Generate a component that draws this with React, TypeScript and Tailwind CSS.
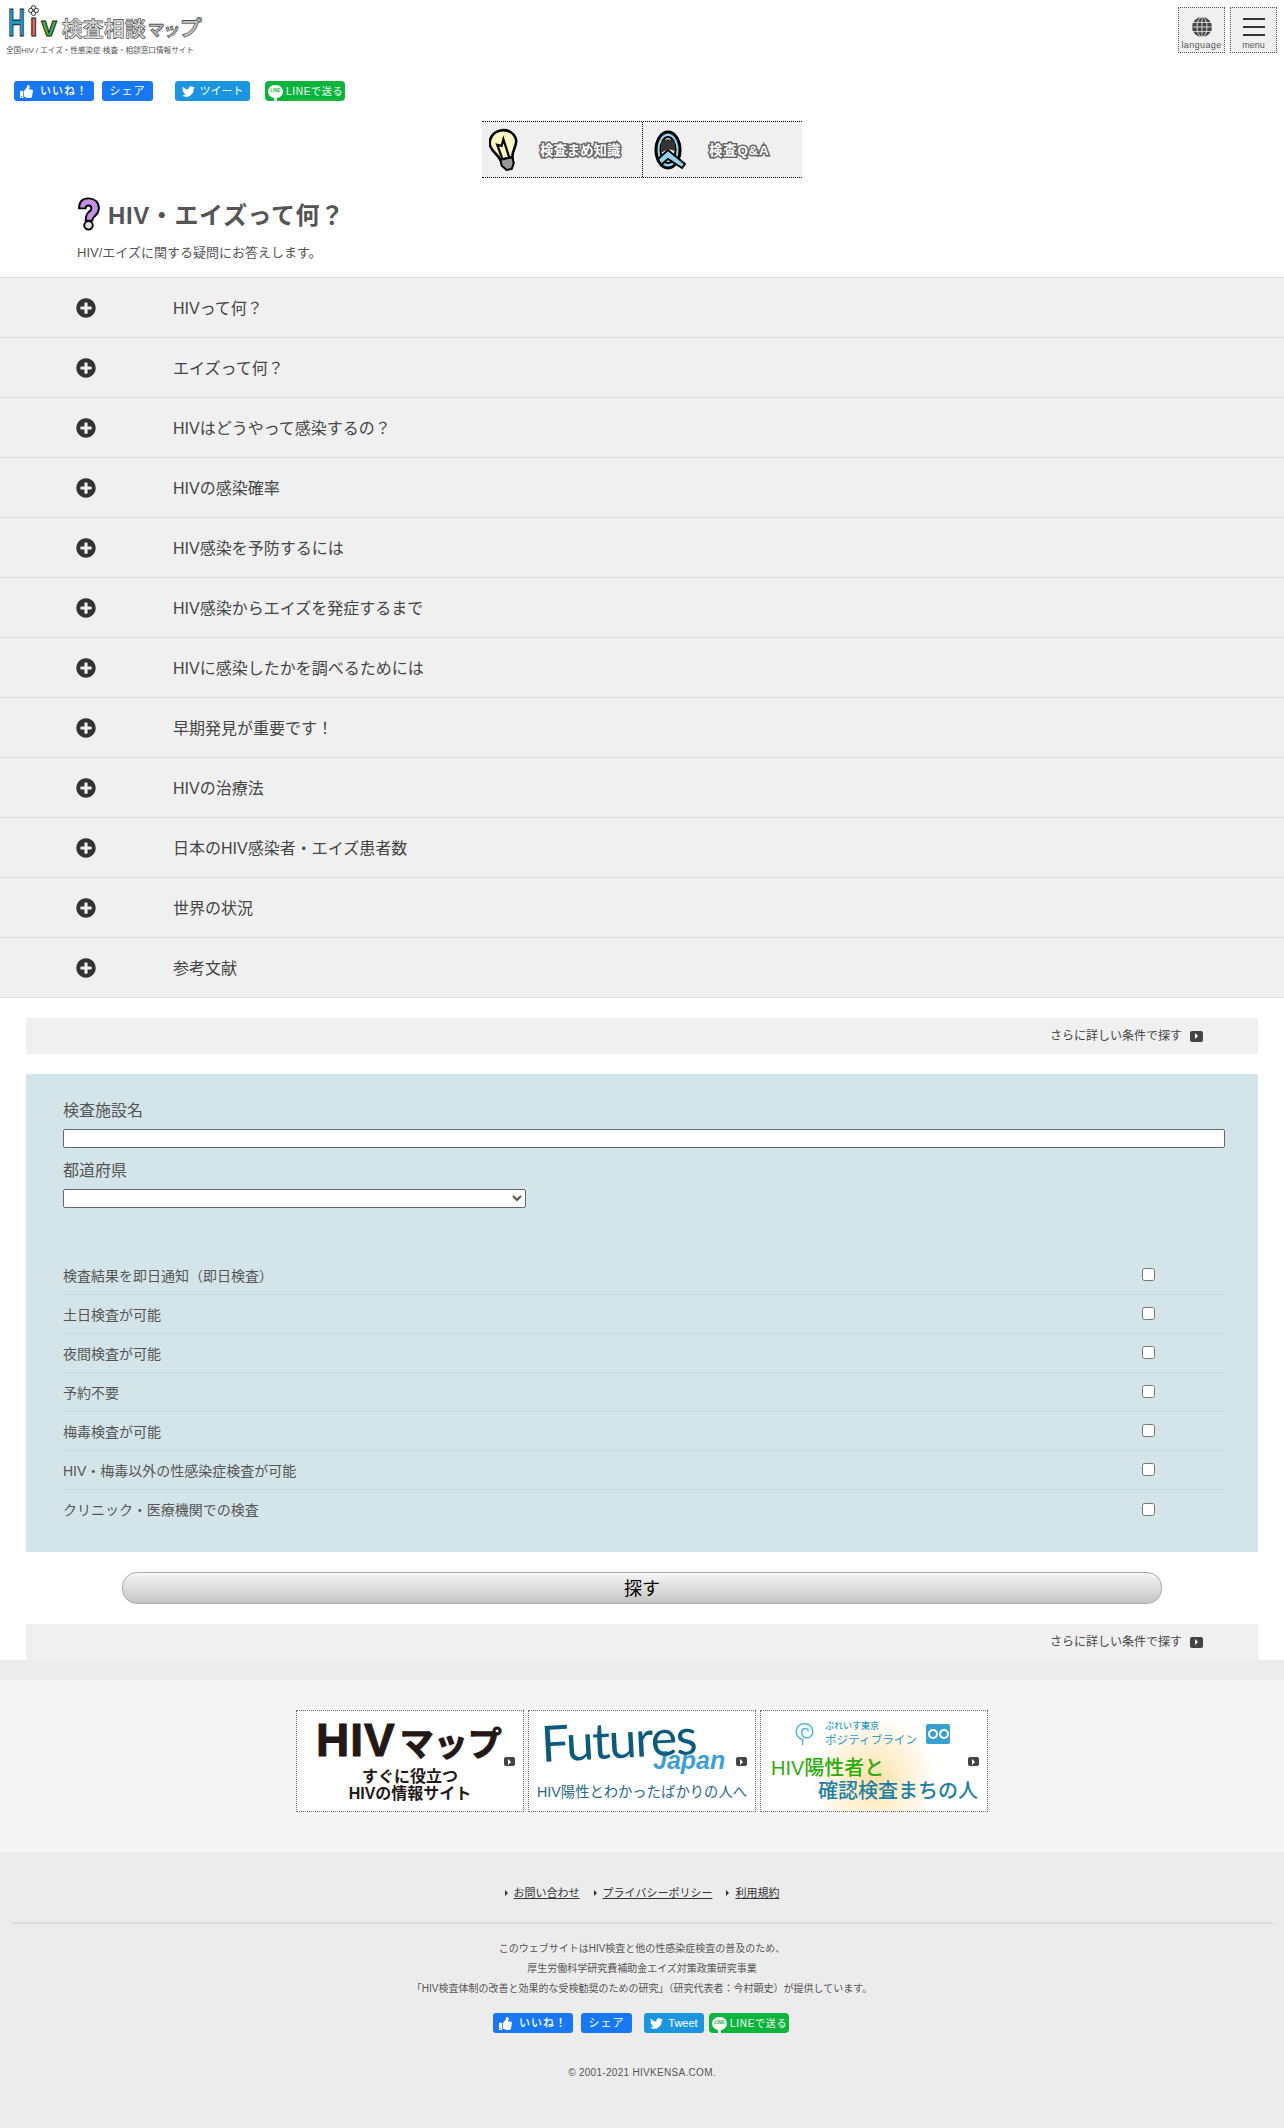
import React from 'react';
import { FaThumbsUp, FaTwitter, FaPlusCircle } from 'react-icons/fa';

const faqItems = [
  'HIVって何？',
  'エイズって何？',
  'HIVはどうやって感染するの？',
  'HIVの感染確率',
  'HIV感染を予防するには',
  'HIV感染からエイズを発症するまで',
  'HIVに感染したかを調べるためには',
  '早期発見が重要です！',
  'HIVの治療法',
  '日本のHIV感染者・エイズ患者数',
  '世界の状況',
  '参考文献',
];

const conditions = [
  '検査結果を即日通知（即日検査）',
  '土日検査が可能',
  '夜間検査が可能',
  '予約不要',
  '梅毒検査が可能',
  'HIV・梅毒以外の性感染症検査が可能',
  'クリニック・医療機関での検査',
];

const ArrowBadge = ({ size = 'h-[11px] w-[13px]' }: { size?: string }) => (
  <span className={`flex ${size} items-center justify-center rounded-[2px] bg-[#444]`}>
    <span className="h-0 w-0 border-y-[3px] border-l-[3px] border-y-transparent border-l-white" />
  </span>
);

const LineBubble = () => (
  <span className="relative flex h-[13px] w-[15px] shrink-0 items-center justify-center rounded-full bg-white">
    <span className="text-[4.5px] leading-none font-bold tracking-normal text-[#0bb53b]">LINE</span>
    <span className="absolute bottom-[-3px] left-[6px] h-[4px] w-[3px] bg-white" />
  </span>
);

const SocialButtons = ({ tweet, tweetClass, lineClass }: { tweet: string; tweetClass: string; lineClass: string }) => (
  <div className="flex h-5 items-stretch text-white">
    <span className="flex w-[80px] items-center justify-center gap-[7px] rounded-[3px] bg-[#1877f2] text-[11px] font-medium tracking-[1px]">
      <FaThumbsUp className="h-[13px] w-[13px]" />
      いいね！
    </span>
    <span className="ml-2 flex w-[51px] items-center justify-center rounded-[3px] bg-[#1877f2] text-[11px] tracking-[1px]">
      シェア
    </span>
    <span className={`${tweetClass} flex items-center justify-center gap-[5px] rounded-[3px] bg-[#1b95e0] text-[11px]`}>
      <FaTwitter className="h-[13px] w-[13px]" />
      {tweet}
    </span>
    <span className={`${lineClass} flex w-[80px] items-center gap-[3px] rounded-[4px] bg-[#0bb53b] pl-[3px] text-[10px] tracking-[0.7px] whitespace-nowrap`}>
      <LineBubble />
      LINEで送る
    </span>
  </div>
);

const MoreBar = () => (
  <div className="mx-[26px] flex h-9 items-center justify-end bg-[#f0f0f0] pr-[55px] text-xs text-[#444]">
    <span>さらに詳しい条件で探す</span>
    <span className="ml-2">
      <ArrowBadge />
    </span>
  </div>
);

const BannerFrame = ({ children }: { children: React.ReactNode }) => (
  <div className="relative h-[102px] w-[228px] border border-dotted border-[#666] bg-white">
    {children}
    <span className="absolute top-[46px] right-[8px]">
      <ArrowBadge size="h-[9px] w-[11px]" />
    </span>
  </div>
);

export default function App() {
  return (
    <div className="min-h-[2128px] bg-white font-['Liberation_Sans','Noto_Sans_CJK_JP',sans-serif] text-[#444]">
      {/* header */}
      <header className="flex h-[72px] justify-between pt-[5px] pr-[7px] pl-[5px]">
        <div>
          <div className="-mt-[1px] flex h-[33px] items-baseline leading-none whitespace-nowrap">
            <span className="ml-[3px] inline-block w-[17px] origin-left scale-x-[.62] text-[38px] font-bold text-[#1f93c4] [-webkit-text-stroke:1px_#222]">H</span>
            <span className="relative ml-[5px] text-[26px] font-bold text-[#e2685c] [-webkit-text-stroke:1px_#222]">
              I
              <svg viewBox="0 0 12 12" className="absolute top-[-9px] left-[-2px] h-[11px] w-[11px]">
                <g fill="#fff" stroke="#222" strokeWidth="1">
                  <circle cx="6" cy="3" r="2.4" />
                  <circle cx="3" cy="6" r="2.4" />
                  <circle cx="9" cy="6" r="2.4" />
                  <circle cx="6" cy="9" r="2.4" />
                </g>
              </svg>
            </span>
            <span className="ml-[4px] text-[28px] font-bold text-[#45b53c] [-webkit-text-stroke:1px_#222]">v</span>
            <span className="ml-[5px] text-[21px] font-bold text-[#ddd] [-webkit-text-stroke:0.6px_#444]">検査相談</span>
            <span className="ml-[1px] -skew-x-6 text-[17px] font-bold tracking-[-1px] text-[#bbb] [-webkit-text-stroke:0.6px_#333]">マッ</span>
            <span className="-skew-x-6 text-[22px] font-bold text-[#bbb] [-webkit-text-stroke:0.6px_#333]">プ</span>
          </div>
          <p className="mt-[9px] ml-[1px] text-[7.6px] leading-[10px] whitespace-nowrap text-[#555]">全国HIV / エイズ・性感染症 検査・相談窓口情報サイト</p>
        </div>
        <div className="mt-[2px] flex gap-[5px]">
          <button className="flex h-[46px] w-[47px] flex-col items-center border border-dotted border-[#555] bg-[#f0f0f0] pt-[9px]">
            <svg viewBox="0 0 24 24" className="h-5 w-5 text-[#444]">
              <circle cx="12" cy="12" r="12" fill="currentColor" />
              <g stroke="#f0f0f0" strokeWidth="1" fill="none">
                <path d="M1 6.5h22M0 12h24M1 17.5h22M12 0v24" />
                <ellipse cx="12" cy="12" rx="6" ry="12" />
              </g>
            </svg>
            <span className="mt-[3px] text-[9px] leading-[10px] tracking-[0.4px] text-[#555]">language</span>
          </button>
          <button className="flex h-[46px] w-[47px] flex-col items-center border border-dotted border-[#555] bg-[#f0f0f0] pt-[10px]">
            <span className="flex h-[18px] w-[22px] flex-col justify-between">
              <span className="h-[2px] bg-[#333]" />
              <span className="h-[2px] bg-[#333]" />
              <span className="h-[2px] bg-[#333]" />
            </span>
            <span className="mt-[4px] text-[9px] leading-[10px] text-[#555]">menu</span>
          </button>
        </div>
      </header>

      {/* share buttons */}
      <div className="mt-[9px] pl-[14px]">
        <SocialButtons tweet="ツイート" tweetClass="ml-[22px] w-[75px]" lineClass="ml-[15px]" />
      </div>

      {/* sub nav */}
      <nav className="mt-5 flex justify-center">
        <div className="flex h-[57px] w-[320px] border-y border-dotted border-black bg-[#f0f0f0]">
          <a className="flex w-[161px] items-center border-r border-dotted border-black pl-[7px]">
            <svg viewBox="0 0 30 42" className="h-[43px] w-[31px] shrink-0">
              <g transform="rotate(-12 15 21)">
                <path d="M15 2C7 2 2 8 2 14c0 6 5 9 7 16h12c1-7 7-10 7-16 0-6-5-12-13-12z" fill="#fdf8bf" stroke="#000" strokeWidth="2.5" />
                <path d="M11 29l-2-14 4 2 3-6 2 19" fill="none" stroke="#000" strokeWidth="2.2" />
                <path d="M9 30h12v6l-3 5h-5l-4-5z" fill="#999" stroke="#000" strokeWidth="2" />
              </g>
            </svg>
            <span className="ml-[20px] pt-[3px] text-[13.4px] font-bold whitespace-nowrap text-white [paint-order:stroke_fill] [-webkit-text-stroke:3px_#666]">検査まめ知識</span>
          </a>
          <a className="flex flex-1 items-center pl-[11px]">
            <svg viewBox="0 0 32 40" className="h-[40px] w-[32px] shrink-0">
              <ellipse cx="14" cy="20" rx="12" ry="18" fill="#8fd4ea" stroke="#000" strokeWidth="3" />
              <ellipse cx="14" cy="20" rx="7.5" ry="13" fill="#fff" stroke="#000" strokeWidth="2" />
              <path d="M7 13c2-5 12-5 14 0l0 8-7-2-7 4z" fill="#333" />
              <path d="M4 29l10-9 17 14-3 4-14-9-7 6z" fill="#8fd4ea" stroke="#000" strokeWidth="2" />
            </svg>
            <span className="ml-[23px] pt-[3px] text-[13.4px] font-bold tracking-[0.8px] whitespace-nowrap text-white [paint-order:stroke_fill] [-webkit-text-stroke:3px_#666]">検査Q&amp;A</span>
          </a>
        </div>
      </nav>

      {/* page title */}
      <div className="flex h-[99px] flex-col pl-[77px]">
        <div className="mt-[18px] flex h-[36px] items-center">
          <svg viewBox="0 0 24 36" className="h-[34px] w-[23px]">
            <path d="M2 12C2 5 6 1.5 12 1.5S23 5 23 12c0 5-3 7-5 9-1 1-2 3-2 4H9c0-4 1-7 3-9 2-1 3-2 3-4 0-2-1-3-3-3s-3 1-3 3z" fill="#c58fe8" stroke="#000" strokeWidth="2" />
            <circle cx="12" cy="30" r="4.5" fill="#ddd" stroke="#000" strokeWidth="2" />
          </svg>
          <h1 className="ml-2 pt-[4px] text-2xl leading-none font-bold tracking-[0.6px] text-[#555]">HIV・エイズって何？</h1>
        </div>
        <p className="mt-[11px] text-[13px] leading-[20px] text-[#555]">HIV/エイズに関する疑問にお答えします。</p>
      </div>

      {/* faq accordion */}
      <ul className="border-t border-[#ddd]">
        {faqItems.map((item) => (
          <li key={item} className="flex h-[60px] items-center border-b border-[#ddd] bg-[#f0f0f0] pl-[76px]">
            <FaPlusCircle className="h-5 w-5 text-[#333]" />
            <span className="ml-[77px] pt-[2px] text-base text-[#444]">{item}</span>
          </li>
        ))}
      </ul>

      <div className="mt-5">
        <MoreBar />
      </div>

      {/* search form */}
      <form className="mx-[26px] mt-5 h-[478px] bg-[#d4e5e9] pr-[33px] pl-[37px] text-[#555]">
        <label className="block pt-[25px] text-base leading-[24px]">検査施設名</label>
        <input className="mt-[6px] block h-[19px] w-full rounded-[2px] border border-[#667] bg-white" />
        <label className="mt-[11px] block text-base leading-[24px]">都道府県</label>
        <select className="mt-[6px] block h-[19px] w-[463px] appearance-auto rounded-[2px] border border-[#667] bg-white text-[11px]">
          <option></option>
        </select>
        <ul className="mt-[48px]">
          {conditions.map((label) => (
            <li key={label} className="flex h-[39px] items-center justify-between border-b border-[#c9dade] last:border-b-0">
              <span className="pt-[1px] text-sm">{label}</span>
              <input type="checkbox" className="mr-[70px] mb-[1px] h-[13px] w-[13px] appearance-auto" />
            </li>
          ))}
        </ul>
      </form>

      <div className="mt-5 flex justify-center">
        <button className="h-8 w-[1040px] rounded-[15px] border border-[#aaa] bg-gradient-to-b from-[#f6f6f6] to-[#c4c4c4] pt-[2px] text-lg leading-none text-black">
          探す
        </button>
      </div>

      <div className="mt-5">
        <MoreBar />
      </div>

      {/* banners */}
      <div className="border-t-[20px] border-[#ececec] bg-[#f5f5f5] pt-[30px] pb-[40px]">
        <div className="flex justify-center gap-1">
          <BannerFrame>
            <div className="flex h-full flex-col items-center pt-[12px] text-[#231815]">
              <div className="flex h-[34px] w-full items-baseline pl-[19px] leading-[34px] font-bold whitespace-nowrap">
                <span className="text-[46px] tracking-[1px] [-webkit-text-stroke:1px_#231815]">HIV</span>
                <span className="ml-[4px] text-[34px] [-webkit-text-stroke:1px_#231815]">マップ</span>
              </div>
              <div className="mt-[11px] text-center text-base leading-[17px] font-bold">
                すぐに役立つ
                <br />
                HIVの情報サイト
              </div>
            </div>
          </BannerFrame>
          <BannerFrame>
            <div className="flex h-full flex-col pt-[9px] pl-[12px]">
              <div className="origin-left -rotate-3 font-['Lato',sans-serif] text-[50px] leading-[46px] tracking-[-1.5px] text-[#0c5a7d]">Futures</div>
              <div className="mt-[-19px] ml-[112px] text-[25px] leading-[26px] font-bold text-[#3d9ed8] italic">Japan</div>
              <div className="mt-[9px] ml-[-4px] text-[14.3px] leading-[20px] whitespace-nowrap text-[#27688c]">HIV陽性とわかったばかりの人へ</div>
            </div>
          </BannerFrame>
          <BannerFrame>
            <div className="flex h-full flex-col bg-[radial-gradient(circle_at_50%_68%,#fde2a6_0%,#ffffff_48%)]">
              <div className="mt-[10px] flex h-[26px] items-center pl-[33px]">
                <svg viewBox="0 0 22 26" className="h-[24px] w-[21px] shrink-0" fill="none" stroke="#4eb7d7" strokeWidth="1.6">
                  <path d="M9 25V19C4 17 2 13 2 10c0-5 4-8 9-8s9 3 9 8-4 8-8 7c-3-1-4-3-4-6s2-4 4-4 3 2 3 3" />
                </svg>
                <span className="ml-[10px] text-[9px] leading-[11px] font-medium whitespace-nowrap text-[#2d9bc9]">
                  ぷれいす東京
                  <br />
                  <span className="text-[11.6px] leading-[15px] font-normal">ポジティブライン</span>
                </span>
                <span className="ml-[9px] flex h-[20px] w-[24px] shrink-0 items-center justify-center gap-[1px] rounded-[2px] bg-[#3aa0d0]">
                  <span className="h-[10px] w-[10px] rounded-full border-2 border-white" />
                  <span className="h-[10px] w-[10px] rounded-full border-2 border-white" />
                </span>
              </div>
              <div className="mt-[9px] ml-[10px] text-[20px] leading-[24px] font-medium whitespace-nowrap text-[#2aac0c]">HIV陽性者と</div>
              <div className="mt-[-1px] ml-[57px] text-[20px] leading-[24px] font-medium whitespace-nowrap text-[#1d7fa6]">確認検査まちの人</div>
            </div>
          </BannerFrame>
        </div>
      </div>

      {/* footer */}
      <footer className="h-[276px] bg-[#ececec] pt-[33px] text-center">
        <ul className="flex justify-center text-[11px] leading-[16px] text-[#333]">
          {['お問い合わせ', 'プライバシーポリシー', '利用規約'].map((link) => (
            <li key={link} className="mx-[7px] flex items-center">
              <span className="mr-[6px] h-0 w-0 border-y-[3px] border-l-[3px] border-y-transparent border-l-[#333]" />
              <a className="underline">{link}</a>
            </li>
          ))}
        </ul>
        <hr className="mx-[11px] mt-[21px] border-t-2 border-[#ddd]" />
        <p className="mt-[15px] text-[10px] leading-[20px] text-[#555]">
          このウェブサイトはHIV検査と他の性感染症検査の普及のため、
          <br />
          厚生労働科学研究費補助金エイズ対策政策研究事業
          <br />
          「HIV検査体制の改善と効果的な受検勧奨のための研究」（研究代表者：今村顕史）が提供しています。
        </p>
        <div className="mt-[14px] mr-[2px] flex justify-center">
          <SocialButtons tweet="Tweet" tweetClass="ml-3 w-[60px]" lineClass="ml-[5px]" />
        </div>
        <p className="mt-[30px] text-[10px] leading-[20px] tracking-[0.3px] text-[#555]">© 2001-2021 HIVKENSA.COM.</p>
      </footer>
    </div>
  );
}
